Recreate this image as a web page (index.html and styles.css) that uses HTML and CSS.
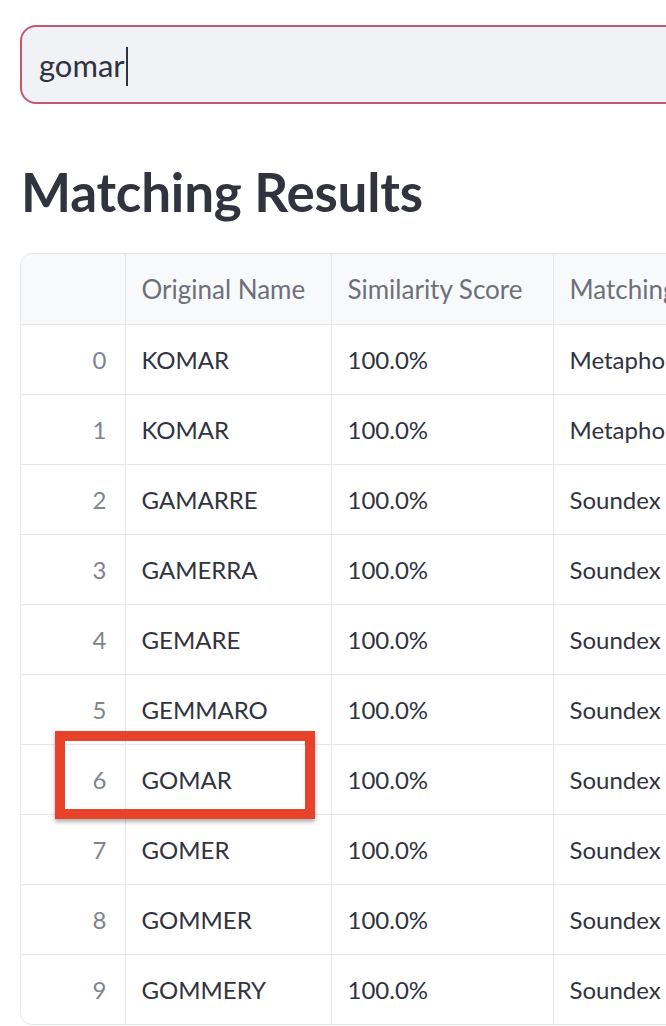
FILE: index.html
```html
<!DOCTYPE html>
<html>
<head>
<meta charset="utf-8">
<link rel="stylesheet" href="styles.css">
</head>
<body>
<div class="page">
  <div class="search">
    <span class="search-text">gomar</span><span class="caret"></span>
  </div>
  <h2 class="title">Matching Results</h2>
  <div class="grid-wrap">
    <table class="grid">
      <colgroup>
        <col class="c-idx"><col class="c-name"><col class="c-score"><col class="c-match">
      </colgroup>
      <thead>
        <tr><th></th><th>Original Name</th><th>Similarity Score</th><th>Matching Algorithm</th></tr>
      </thead>
      <tbody>
        <tr><td class="idx">0</td><td>KOMAR</td><td>100.0%</td><td>Metaphone</td></tr>
        <tr><td class="idx">1</td><td>KOMAR</td><td>100.0%</td><td>Metaphone</td></tr>
        <tr><td class="idx">2</td><td>GAMARRE</td><td>100.0%</td><td>Soundex</td></tr>
        <tr><td class="idx">3</td><td>GAMERRA</td><td>100.0%</td><td>Soundex</td></tr>
        <tr><td class="idx">4</td><td>GEMARE</td><td>100.0%</td><td>Soundex</td></tr>
        <tr><td class="idx">5</td><td>GEMMARO</td><td>100.0%</td><td>Soundex</td></tr>
        <tr><td class="idx">6</td><td>GOMAR</td><td>100.0%</td><td>Soundex</td></tr>
        <tr><td class="idx">7</td><td>GOMER</td><td>100.0%</td><td>Soundex</td></tr>
        <tr><td class="idx">8</td><td>GOMMER</td><td>100.0%</td><td>Soundex</td></tr>
        <tr><td class="idx">9</td><td>GOMMERY</td><td>100.0%</td><td>Soundex</td></tr>
      </tbody>
    </table>
    <div class="highlight"></div>
  </div>
</div>
</body>
</html>
```
FILE: styles.css
```css
html, body {
  margin: 0;
  padding: 0;
  background: #ffffff;
  overflow: hidden;
}
.page {
  width: 1000px;
  padding: 25px 0 0 20px;
  font-family: Lato, "Noto Sans", sans-serif;
  color: #31333f;
}
.search {
  box-sizing: border-box;
  height: 79px;
  width: 900px;
  background: #f0f2f6;
  border: 2px solid #c0596c;
  border-radius: 16px;
  display: flex;
  align-items: center;
  padding-left: 17px;
}
.search-text {
  font-size: 31px;
  color: #31333f;
}
.caret {
  display: inline-block;
  width: 2px;
  height: 39px;
  background: #31333f;
  margin-left: 1px;
  margin-top: 4px;
}
.title {
  margin: 52px 0 0 1px;
  font-size: 53px;
  font-weight: 700;
  line-height: 72px;
  color: #31333f;
  letter-spacing: -0.2px;
}
.grid-wrap {
  position: relative;
  margin-top: 25px;
  width: 900px;
  border: 1px solid #e6e7ea;
  border-radius: 12px;
}
.grid {
  border-collapse: collapse;
  table-layout: fixed;
  width: 100%;
  font-size: 24px;
}
.c-idx { width: 104px; }
.c-name { width: 206px; }
.c-score { width: 222px; }
.grid th, .grid td {
  border-left: 1px solid #e6e7ea;
  border-top: 1px solid #e6e7ea;
  padding: 0 16px;
  text-align: left;
  white-space: nowrap;
  overflow: hidden;
}
.grid tr > :first-child { border-left: none; }
.grid thead th {
  border-top: none;
  height: 70px;
  background: #f8f9fb;
  color: #6d707b;
  font-weight: 400;
  font-size: 26px;
}
.grid thead th:first-child { border-top-left-radius: 11px; }
.grid td { height: 69px; color: #31333f; }
.grid td.idx {
  text-align: right;
  color: #818490;
  padding-right: 18px;
}
.highlight {
  position: absolute;
  left: 34px;
  top: 477px;
  width: 240px;
  height: 68px;
  border: 10px solid #e8432a;
  box-shadow: 0 3px 4px rgba(0, 0, 0, 0.3);
}
```
